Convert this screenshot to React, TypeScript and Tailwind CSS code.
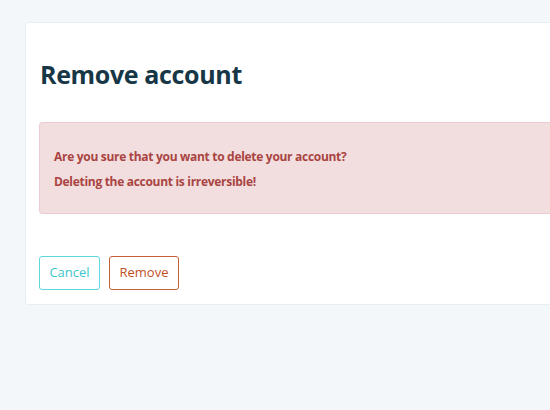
import React from "react";

const RemoveAccount = () => {
  return (
    <div
      className="h-[410px] w-[550px] overflow-hidden bg-[#f3f7fa] pl-[25px] pt-[22px]"
      style={{ fontFamily: '"Open Sans", "Noto Sans", sans-serif' }}
    >
      <div className="w-[600px] rounded-[3px] border border-[#e6eff3] bg-white px-[13px] pb-[14px]">
        <h1 className="pl-[1px] pt-[34px] text-[25px] font-bold leading-[34px] tracking-[-0.35px] text-[#173646]">
          Remove account
        </h1>

        {/* Alert */}
        <div className="mt-[31px] h-[92px] rounded-[3px] border border-[#ebccd1] bg-[#f2dede] px-[14px] pt-[25px] text-[12px] font-bold tracking-[-0.3px] text-[#a94442]">
          <p className="leading-[18px]">
            Are you sure that you want to delete your account?
          </p>
          <p className="mt-[7px] leading-[18px]">
            Deleting the account is irreversible!
          </p>
        </div>

        {/* Actions */}
        <div className="mt-[42px] flex gap-[9px]">
          <button className="h-[34px] w-[61px] rounded-[3px] border border-[#5dd8dc] bg-white text-[13px] text-[#3cc6cb]">
            Cancel
          </button>
          <button className="h-[34px] w-[70px] rounded-[3px] border border-[#c2613b] bg-white text-[13px] text-[#bf4f26]">
            Remove
          </button>
        </div>
      </div>
    </div>
  );
};

export default function App() {
  return <RemoveAccount />;
}
